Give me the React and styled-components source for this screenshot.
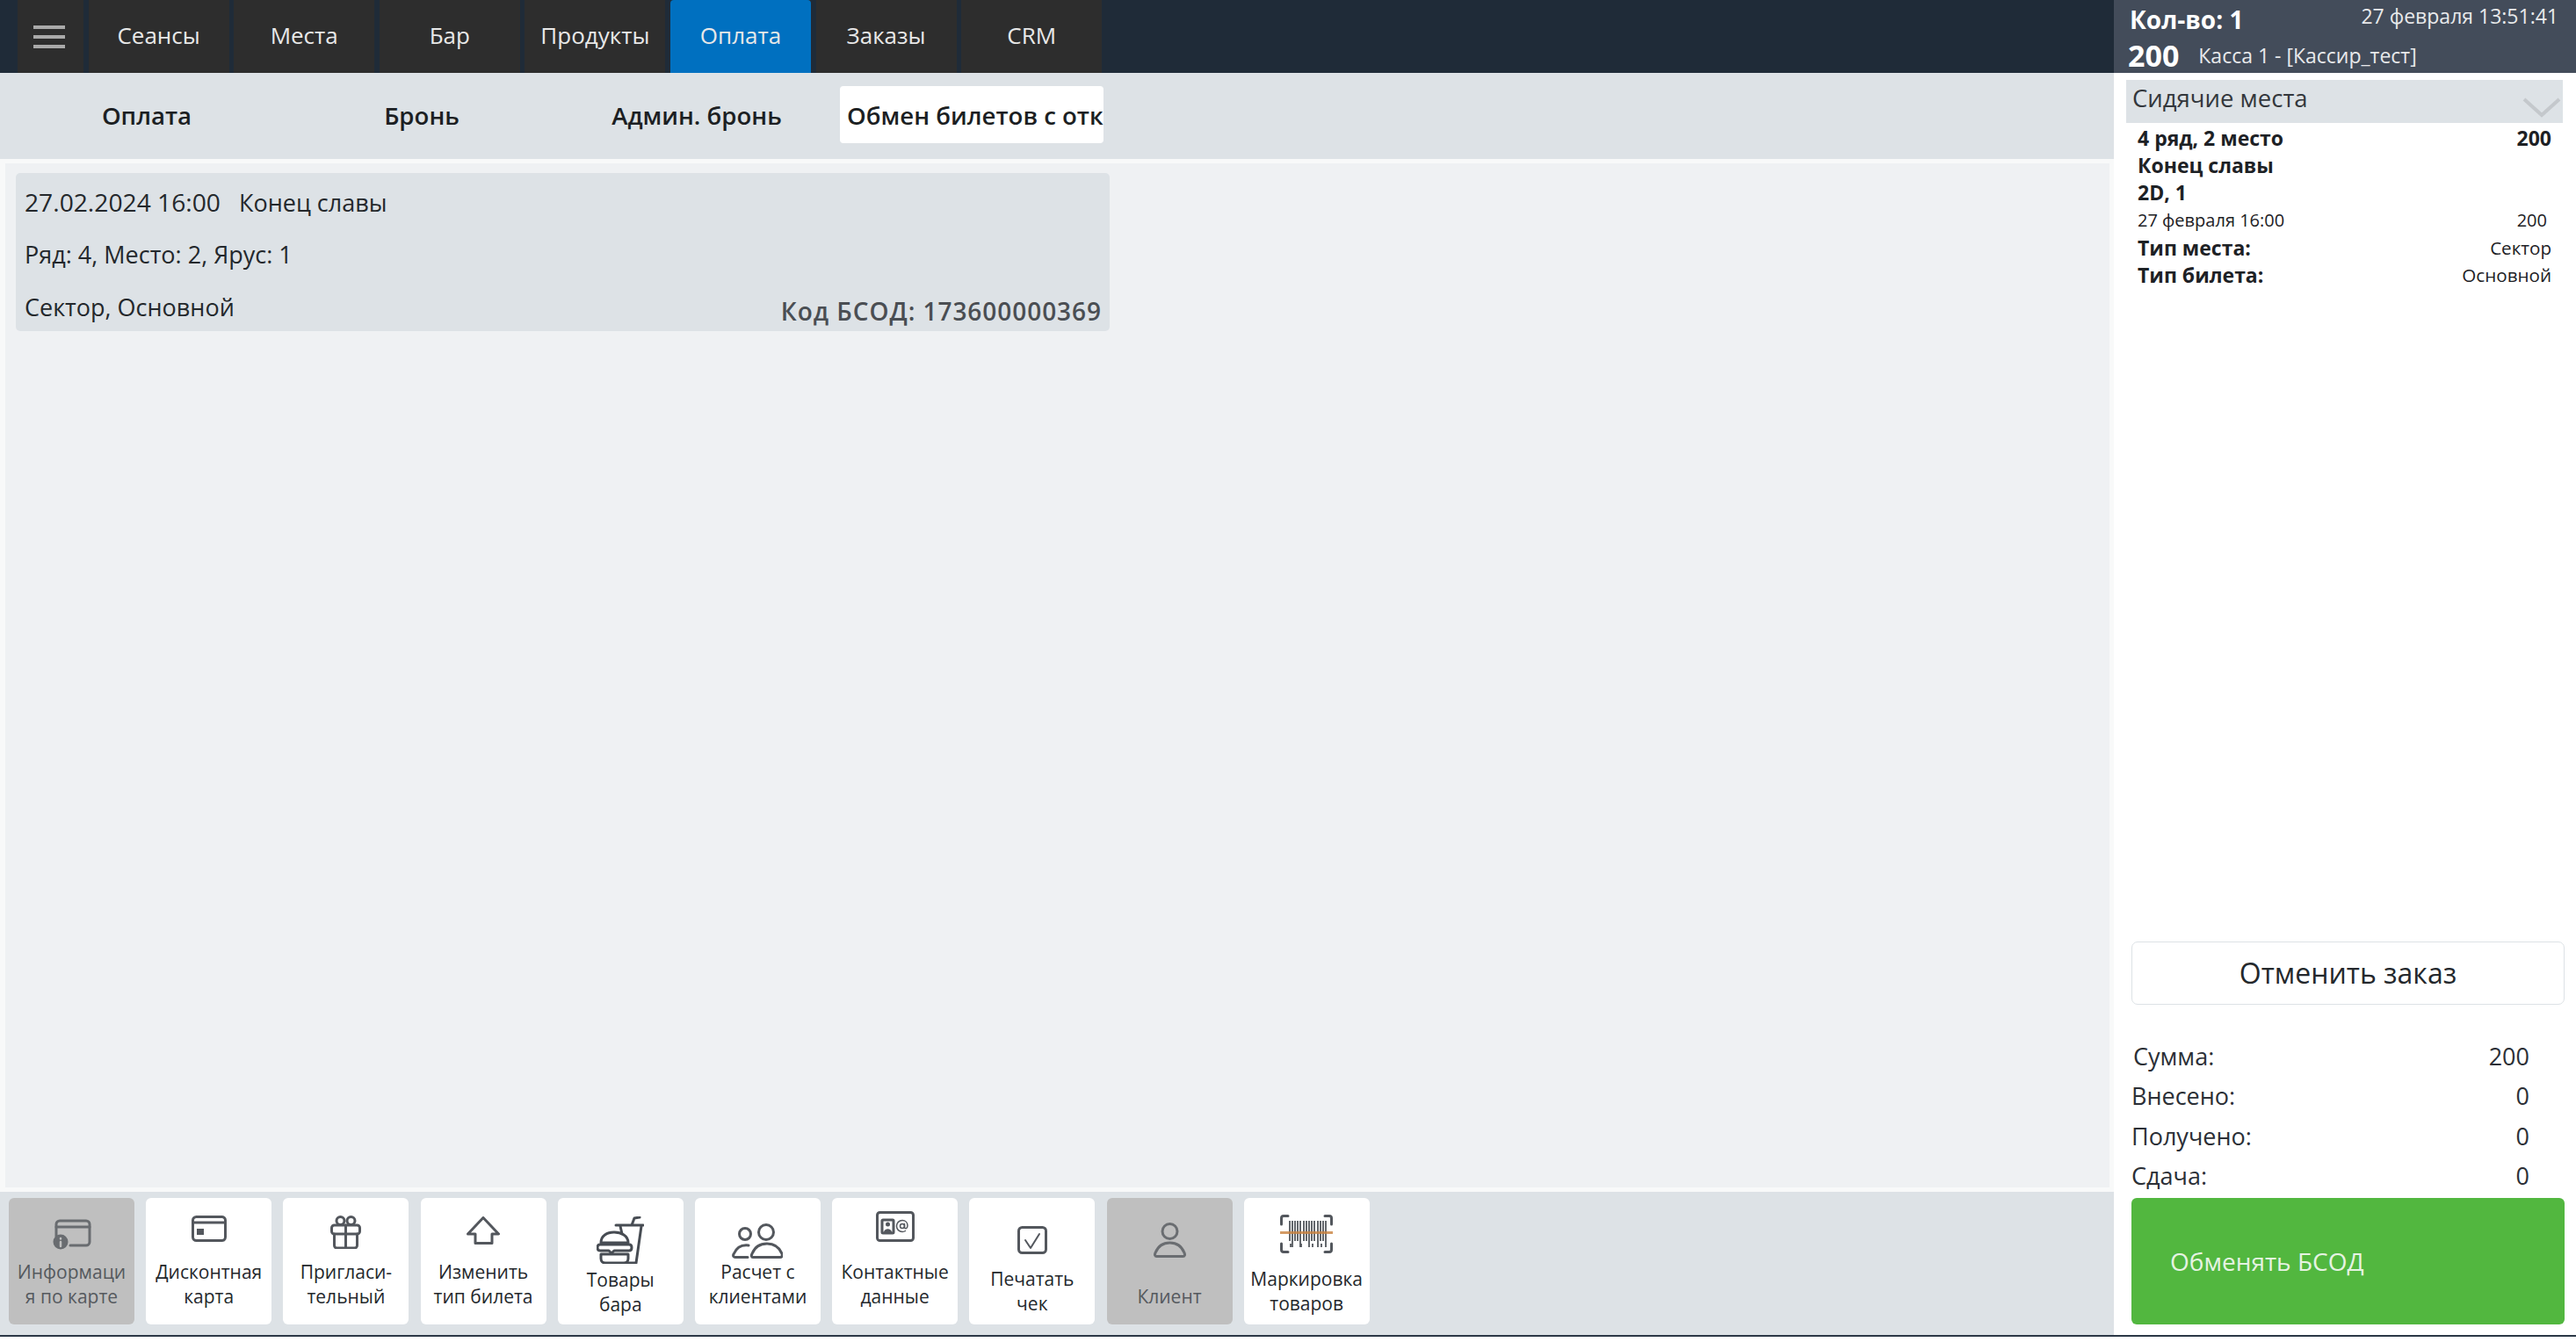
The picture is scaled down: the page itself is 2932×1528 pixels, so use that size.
import React from 'react'
import styled, { createGlobalStyle } from 'styled-components'

const GlobalStyle = createGlobalStyle`
  html, body { margin: 0; padding: 0; background: #fff; }
  body { font-family: "Open Sans", "Noto Sans", sans-serif; color: #22262b; }
`

const Page = styled.div`
  width: 2932px;
  height: 1528px;
  overflow: hidden;
  display: flex;
  flex-direction: column;
`
const Body = styled.div`
  height: 1520px;
  display: grid;
  grid-template-columns: 2406px 526px;
`
const BottomLine = styled.div`
  height: 2px;
  background: #2b3846;
`
const LeftCol = styled.div`
  display: flex;
  flex-direction: column;
  min-height: 0;
`
const Nav = styled.div`
  height: 83px;
  background: #1f2b38;
  display: flex;
  padding-left: 20px;
  gap: 5.6px;
`
const Burger = styled.div`
  width: 75px;
  background: #2d2d2d;
  display: flex;
  align-items: center;
  justify-content: center;
  padding-right: 4px;
  box-sizing: border-box;
`
const NavItem = styled.div`
  width: 160px;
  box-sizing: border-box;
  padding-bottom: 4px;
  background: ${p => (p.$active ? '#0070c0' : '#2d2d2d')};
  color: #e8e8e8;
  font-size: 26px;
  display: flex;
  align-items: center;
  justify-content: center;
  border-radius: ${p => (p.$active ? '4px 4px 0 0' : '0')};
`
const SubBar = styled.div`
  height: 98px;
  box-sizing: border-box;
  background: #dde2e6;
  display: flex;
  gap: 13px;
  padding: 15px 0 0 17px;
`
const SubTab = styled.div`
  width: 300px;
  height: 65px;
  box-sizing: border-box;
  padding: 0 8px;
  border-radius: 4px;
  background: ${p => (p.$active ? '#fff' : 'transparent')};
  font-size: 27.6px;
  font-weight: 600;
  color: #1c1f23;
  display: flex;
  align-items: center;
  justify-content: ${p => (p.$active ? 'flex-start' : 'center')};
  white-space: nowrap;
  overflow: hidden;
`
const Content = styled.div`
  flex: 1;
  min-height: 0;
  background: #eff1f3;
  border: solid #f8f9f9;
  border-width: 5px 5px 5px 6px;
  padding: 11px 12px;
`
const Ticket = styled.div`
  position: relative;
  width: 1245px;
  height: 180px;
  box-sizing: border-box;
  background: #dde2e6;
  border-radius: 5px;
  padding: 3px 0 0 10px;
  font-size: 27px;
  color: #24282c;
`
const TicketLine = styled.div`
  height: 60px;
  line-height: 60px;
  white-space: pre;
`
const TicketDate = styled.span`
  font-size: 28.2px;
`
const TicketCode = styled.div`
  position: absolute;
  right: 9px;
  bottom: 4px;
  font-size: 28px;
  font-weight: 600;
  letter-spacing: 0.95px;
  color: #4a4e53;
`
const Toolbar = styled.div`
  height: 163px;
  box-sizing: border-box;
  background: #dde2e6;
  display: flex;
  gap: 13.2px;
  padding: 7px 0 0 10px;
`
const ToolButton = styled.div`
  width: 143px;
  height: 144px;
  box-sizing: border-box;
  border-radius: 6px;
  background: ${p => (p.$off ? '#bfbfbf' : '#fff')};
  color: ${p => (p.$off ? '#55595e' : '#24282c')};
  display: flex;
  flex-direction: column;
  align-items: center;
  font-size: 21px;
  line-height: 28px;
  text-align: center;
`
const IconSlot = styled.div`
  height: ${p => p.$h}px;
  display: flex;
  align-items: flex-end;
  justify-content: center;
  flex: none;
`
const ToolLabel = styled.div`
  margin-top: ${p => p.$mt}px;
  white-space: pre;
`
const RightCol = styled.div`
  display: flex;
  flex-direction: column;
  min-height: 0;
`
const Head = styled.div`
  height: 83px;
  background: #434c5a;
  color: #fff;
  box-sizing: border-box;
  padding-left: 18px;
`
const HeadTop = styled.div`
  height: 44px;
  display: flex;
  justify-content: space-between;
  align-items: flex-start;
  padding-right: 20px;
`
const Qty = styled.div`
  font-size: 28px;
  font-weight: 700;
  line-height: 44px;
`
const Clock = styled.div`
  font-size: 23px;
  line-height: 36px;
  color: #e8e9eb;
`
const HeadBottom = styled.div`
  display: flex;
  align-items: center;
  gap: 22px;
  height: 38px;
`
const Total = styled.div`
  font-size: 34px;
  font-weight: 700;
  margin-left: -2px;
`
const Cashier = styled.div`
  font-size: 23px;
  color: #e8e9eb;
`
const SectionHead = styled.div`
  margin: 8px 15px 0 14px;
  height: 49px;
  box-sizing: border-box;
  background: #dde2e6;
  padding-left: 7px;
  font-size: 27.5px;
  line-height: 41px;
  color: #33373c;
  position: relative;
`
const Chevron = styled.svg`
  position: absolute;
  right: 2px;
  top: 19px;
`
const Lines = styled.div`
  padding: 2px 28px 0 27px;
`
const Line = styled.div`
  display: flex;
  justify-content: space-between;
  height: ${p => (p.$small ? 32 : 31)}px;
  line-height: ${p => (p.$small ? 32 : 31)}px;
  font-size: ${p => (p.$small ? 20 : 23)}px;
  font-weight: ${p => (p.$small ? 400 : 700)};
  color: #1d2125;
`
const Val = styled.span`
  font-weight: 400;
  font-size: 20.6px;
`
const SmallVal = styled.span`
  padding-right: 5px;
`
const Strong = styled.span`
  font-weight: 700;
  font-size: 23px;
`
const Spacer = styled.div`
  flex: 1;
`
const CancelBtn = styled.div`
  margin: 0 13px 0 20px;
  height: 72px;
  box-sizing: border-box;
  border: 1px solid #dde2e6;
  border-radius: 7px;
  font-size: 32px;
  display: flex;
  align-items: center;
  justify-content: center;
  color: #24282c;
`
const Summary = styled.div`
  margin-top: 36px;
  padding: 0 53px 2px 20px;
`
const SumRow = styled.div`
  display: flex;
  justify-content: space-between;
  height: 45.6px;
  line-height: 45.6px;
  font-size: 27px;
  color: #2b2f36;
`
const SumLabel = styled.span`
  margin-left: ${p => p.$shift || 0}px;
`
const PayBtn = styled.div`
  margin: 0 13px 12px 20px;
  height: 144px;
  box-sizing: border-box;
  background: #52b73f;
  border-radius: 6px;
  color: #e6f3e2;
  font-size: 28px;
  display: flex;
  align-items: center;
  padding-left: 44px;
`

const stroke = { fill: 'none', stroke: 'currentColor', strokeWidth: 3, strokeLinecap: 'round', strokeLinejoin: 'round' }

const CardInfoIcon = () => (
  <svg width="44" height="35" viewBox="0 0 44 35" {...stroke} color="#696c70">
    <path d="M4 20V6a4 4 0 0 1 4-4h30a4 4 0 0 1 4 4v20a4 4 0 0 1-4 4H20" />
    <path d="M4 9h38" strokeWidth="3" />
    <circle cx="9" cy="26" r="8.5" fill="currentColor" stroke="none" />
    <path d="M9 22v.5M9 26v5" stroke="#bfbfbf" strokeWidth="2.5" />
  </svg>
)
const CardIcon = () => (
  <svg width="40" height="30" viewBox="0 0 40 30" {...stroke} color="#53575d">
    <rect x="1.5" y="1.5" width="37" height="27" rx="4" />
    <path d="M2 8h36" />
    <rect x="6" y="15" width="8" height="7" fill="currentColor" stroke="none" />
  </svg>
)
const GiftIcon = () => (
  <svg width="35" height="38" viewBox="0 0 35 38" {...stroke} color="#53575d">
    <circle cx="11.5" cy="6" r="4.5" />
    <circle cx="23.5" cy="6" r="4.5" />
    <rect x="1.5" y="11" width="32" height="10" rx="3" />
    <path d="M4.5 21v13a3 3 0 0 0 3 3h20a3 3 0 0 0 3-3V21M17.5 11v26" />
  </svg>
)
const ArrowIcon = () => (
  <svg width="38" height="32" viewBox="0 0 38 32" {...stroke} color="#53575d">
    <path d="M19 1.5 36.5 20H29v10.5H10V20H1.5z" />
  </svg>
)
const BarIcon = () => (
  <svg width="54" height="54" viewBox="0 0 54 54" {...stroke} color="#474c53">
    <path d="M22 10h31M27 11l2 9M51 11l-6 42H34M40 10l3-8 6-1" />
    <path d="M5 30c0-8 7-12 15-12s16 4 16 12z" fill="#fff" />
    <path d="M4 32h33c4 0 4 7 0 7H20l-3 3-3-3H4c-4 0-4-7 0-7z" fill="#fff" />
    <path d="M5 43h31v5c0 3-2 5-5 5H10c-3 0-5-2-5-5z" fill="#fff" />
  </svg>
)
const PeopleIcon = () => (
  <svg width="58" height="40" viewBox="0 0 58 40" {...stroke} color="#53575d">
    <circle cx="15" cy="12" r="6.5" />
    <circle cx="39" cy="10" r="8.5" />
    <path d="M19 25c-8-1-14 3-17 10-1 2 0 3.500 2 3.500h14" />
    <path d="M24 38.500c-2 0-2-2-1-4C26 27 32 23 40 23s14 4 17 11.500c1 2 0 4-2 4z" />
  </svg>
)
const ContactIcon = () => (
  <svg width="44" height="35" viewBox="0 0 44 35" {...stroke} color="#53575d">
    <rect x="1.5" y="1.5" width="41" height="32" rx="3" />
    <rect x="7" y="10" width="13" height="15" rx="1" />
    <circle cx="13.5" cy="15" r="2.5" fill="currentColor" stroke="none" />
    <path d="M9 24c.5-5 8.500-5 9 0z" fill="currentColor" stroke="none" />
    <circle cx="30" cy="17" r="2.5" strokeWidth="1.5" />
    <path d="M32.500 14.500v3.500c0 3 3.500 2 3.500-1.500 0-3.500-2.500-6-6-6a6.500 6.500 0 0 0 0 13c1.500 0 2.500-.3 3.500-1" strokeWidth="1.5" />
  </svg>
)
const CheckIcon = () => (
  <svg width="34" height="32" viewBox="0 0 34 32" {...stroke} color="#53575d">
    <rect x="1.5" y="1.5" width="31" height="29" rx="4" />
    <path d="M9 16l6 9 10-16" strokeWidth="2" />
  </svg>
)
const PersonIcon = () => (
  <svg width="37" height="40" viewBox="0 0 37 40" {...stroke} color="#6a6d71">
    <circle cx="18.500" cy="10" r="8.500" />
    <path d="M3.500 38.500c-2 0-2.500-2-1.500-4C5 27 11 23 18.500 23s13.500 4 16.500 11.500c1 2 .5 4-1.500 4z" />
  </svg>
)
const barX = [11, 14, 17, 20, 23, 27, 30, 33, 36, 39, 43, 46, 49, 52]
const BarcodeIcon = () => (
  <svg width="60" height="44" viewBox="0 0 60 44" {...stroke} color="#53575d">
    <path d="M1.500 11V4c0-1.500 1-2.500 2.500-2.500h5M58.500 11V4c0-1.500-1-2.500-2.500-2.500h-5M1.500 33v7c0 1.500 1 2.500 2.500 2.500h5M58.500 33v7c0 1.500-1 2.500-2.500 2.500h-5" />
    {barX.map((x, i) => (
      <path key={x} d={`M${x} 7V${i % 3 === 1 ? 37 : 30}`} strokeWidth="1.8" strokeLinecap="butt" />
    ))}
    <path d="M12 33v4M24 33v4M37 33v4M47 33v4" strokeWidth="1.8" strokeLinecap="butt" />
    <path d="M0 20.500h60" stroke="#c9823f" strokeWidth="3" strokeLinecap="butt" opacity="0.8" />
  </svg>
)

const navItems = ['Сеансы', 'Места', 'Бар', 'Продукты', 'Оплата', 'Заказы', 'CRM']
const subTabs = ['Оплата', 'Бронь', 'Админ. бронь', 'Обмен билетов с отк']
// h - низ иконки от верха кнопки, top - начало подписи
const tools = [
  { text: 'Информаци\nя по карте', Icon: CardInfoIcon, h: 59, top: 70, off: true },
  { text: 'Дисконтная\nкарта', Icon: CardIcon, h: 50, top: 70 },
  { text: 'Пригласи-\nтельный', Icon: GiftIcon, h: 58, top: 70 },
  { text: 'Изменить\nтип билета', Icon: ArrowIcon, h: 53, top: 70 },
  { text: 'Товары\nбара', Icon: BarIcon, h: 75, top: 79 },
  { text: 'Расчет с\nклиентами', Icon: PeopleIcon, h: 69, top: 70 },
  { text: 'Контактные\nданные', Icon: ContactIcon, h: 50, top: 70 },
  { text: 'Печатать\nчек', Icon: CheckIcon, h: 64, top: 78 },
  { text: 'Клиент', Icon: PersonIcon, h: 68, top: 98, off: true },
  { text: 'Маркировка\nтоваров', Icon: BarcodeIcon, h: 63, top: 78 },
]

const App = () => (
  <Page>
    <GlobalStyle />
    <Body>
      <LeftCol>
        <Nav>
          <Burger>
            <svg width="36" height="28" viewBox="0 0 36 28">
              <path d="M0 3h36M0 14h36M0 25h36" stroke="#a9a9a9" strokeWidth="4" />
            </svg>
          </Burger>
          {navItems.map(n => (
            <NavItem key={n} $active={n === 'Оплата'}>{n}</NavItem>
          ))}
        </Nav>
        <SubBar>
          {subTabs.map((t, i) => (
            <SubTab key={t} $active={i === 3}>{t}</SubTab>
          ))}
        </SubBar>
        <Content>
          <Ticket>
            <TicketLine><TicketDate>27.02.2024 16:00</TicketDate>{'   Конец славы'}</TicketLine>
            <TicketLine>Ряд: 4, Место: 2, Ярус: 1</TicketLine>
            <TicketLine>Сектор, Основной</TicketLine>
            <TicketCode>Код БСОД: 173600000369</TicketCode>
          </Ticket>
        </Content>
        <Toolbar>
          {tools.map(({ text, Icon, h, top, off }) => (
            <ToolButton key={text} $off={off}>
              <IconSlot $h={h}><Icon /></IconSlot>
              <ToolLabel $mt={top - h}>{text}</ToolLabel>
            </ToolButton>
          ))}
        </Toolbar>
      </LeftCol>
      <RightCol>
        <Head>
          <HeadTop>
            <Qty>Кол-во: 1</Qty>
            <Clock>27 февраля 13:51:41</Clock>
          </HeadTop>
          <HeadBottom>
            <Total>200</Total>
            <Cashier>Касса 1 - [Кассир_тест]</Cashier>
          </HeadBottom>
        </Head>
        <SectionHead>
          Сидячие места
          <Chevron width="44" height="24" viewBox="0 0 44 24">
            <path d="M2 3l20 18L42 3" fill="none" stroke="#c4c8cc" strokeWidth="4" />
          </Chevron>
        </SectionHead>
        <Lines>
          <Line><span>4 ряд, 2 место</span><Strong>200</Strong></Line>
          <Line><span>Конец славы</span></Line>
          <Line><span>2D, 1</span></Line>
          <Line $small><span>27 февраля 16:00</span><SmallVal>200</SmallVal></Line>
          <Line><span>Тип места:</span><Val>Сектор</Val></Line>
          <Line><span>Тип билета:</span><Val>Основной</Val></Line>
        </Lines>
        <Spacer />
        <CancelBtn>Отменить заказ</CancelBtn>
        <Summary>
          <SumRow><SumLabel $shift={2}>Сумма:</SumLabel><span>200</span></SumRow>
          <SumRow><SumLabel>Внесено:</SumLabel><span>0</span></SumRow>
          <SumRow><SumLabel>Получено:</SumLabel><span>0</span></SumRow>
          <SumRow><SumLabel>Сдача:</SumLabel><span>0</span></SumRow>
        </Summary>
        <PayBtn>Обменять БСОД</PayBtn>
      </RightCol>
    </Body>
    <BottomLine />
  </Page>
)

export default App
